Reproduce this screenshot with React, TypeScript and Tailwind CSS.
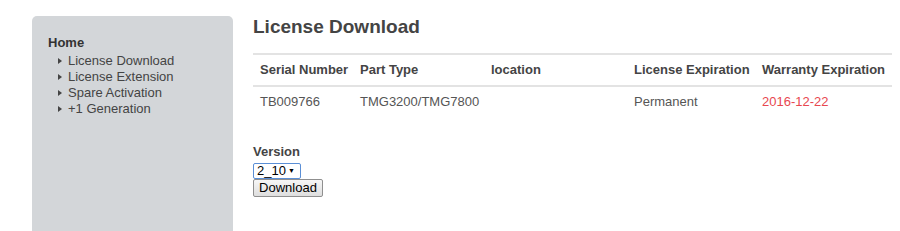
import React, { useState } from 'react';

const navItems = ['License Download', 'License Extension', 'Spare Activation', '+1 Generation'];

const columns = [
    { label: 'Serial Number', width: 'w-[100px]' },
    { label: 'Part Type', width: 'w-[131px]' },
    { label: 'location', width: 'w-[143px]' },
    { label: 'License Expiration', width: 'w-[128px]' },
    { label: 'Warranty Expiration', width: 'w-[137px]' },
];

const rows = [
    { serial: 'TB009766', part: 'TMG3200/TMG7800', location: '', license: 'Permanent', warranty: '2016-12-22' },
];

const App: React.FC = () => {
    const [version, setVersion] = useState('2_10');

    return (
        <div className="flex h-[231px] w-[900px] overflow-hidden bg-white font-['Liberation_Sans',Arial,sans-serif] text-[13px]">
            <aside className="ml-[32px] mt-[16px] w-[201px] shrink-0 rounded-t-[5px] bg-[#d3d6d9] pl-[16px] pt-[19px]">
                <div className="text-[13px] font-bold leading-[16px] text-[#333]">Home</div>
                <ul className="mt-[2px]">
                    {navItems.map((item) => (
                        <li key={item} className="flex items-center leading-[16px] text-[#444]">
                            <span className="ml-[10px] mr-[6px] inline-block h-0 w-0 border-y-[3.5px] border-l-[4px] border-y-transparent border-l-[#444]" />
                            <span className="text-[13px]">{item}</span>
                        </li>
                    ))}
                </ul>
            </aside>

            <main className="ml-[20px] w-[639px] pt-[15px]">
                <h1 className="text-[19px] font-bold leading-[24px] text-[#444]">License Download</h1>

                <table className="mt-[14px] w-[639px] table-fixed border-collapse">
                    <thead>
                        <tr className="border-t-2 border-b-2 border-[#e3e3e3]">
                            {columns.map((col) => (
                                <th key={col.label} className={`${col.width} h-[32px] whitespace-nowrap px-[7px] text-left align-middle font-bold text-[#444]`}>
                                    {col.label}
                                </th>
                            ))}
                        </tr>
                    </thead>
                    <tbody>
                        {rows.map((row) => (
                            <tr key={row.serial}>
                                <td className="h-[31px] whitespace-nowrap px-[7px] text-[#555]">{row.serial}</td>
                                <td className="whitespace-nowrap px-[7px] text-[#555]">{row.part}</td>
                                <td className="whitespace-nowrap px-[7px] text-[#555]">{row.location}</td>
                                <td className="whitespace-nowrap px-[7px] text-[#555]">{row.license}</td>
                                <td className="whitespace-nowrap px-[7px] text-[#e8474f]">{row.warranty}</td>
                            </tr>
                        ))}
                    </tbody>
                </table>

                <div className="mt-[27px] text-[13px] font-bold leading-[16px] text-[#444]">Version</div>
                <div className="relative mt-[3px] h-[16px] w-[48px]">
                    <select
                        value={version}
                        onChange={(e) => setVersion(e.target.value)}
                        className="block h-[16px] w-[48px] appearance-none rounded-[2px] border border-[#5b8fd6] bg-white py-0 pl-[3px] text-[13px] leading-[14px] text-black outline-none"
                    >
                        <option value="2_10">2_10</option>
                    </select>
                    <span className="pointer-events-none absolute right-[6px] top-[2px] text-[7px] leading-[12px] text-black">▼</span>
                </div>
                <button className="block h-[18px] w-[70px] rounded-[2px] border border-[#8f8f8f] bg-gradient-to-b from-[#f6f6f6] to-[#dedede] text-[13px] leading-[14px] text-black">
                    Download
                </button>
            </main>
        </div>
    );
};

export default App;
